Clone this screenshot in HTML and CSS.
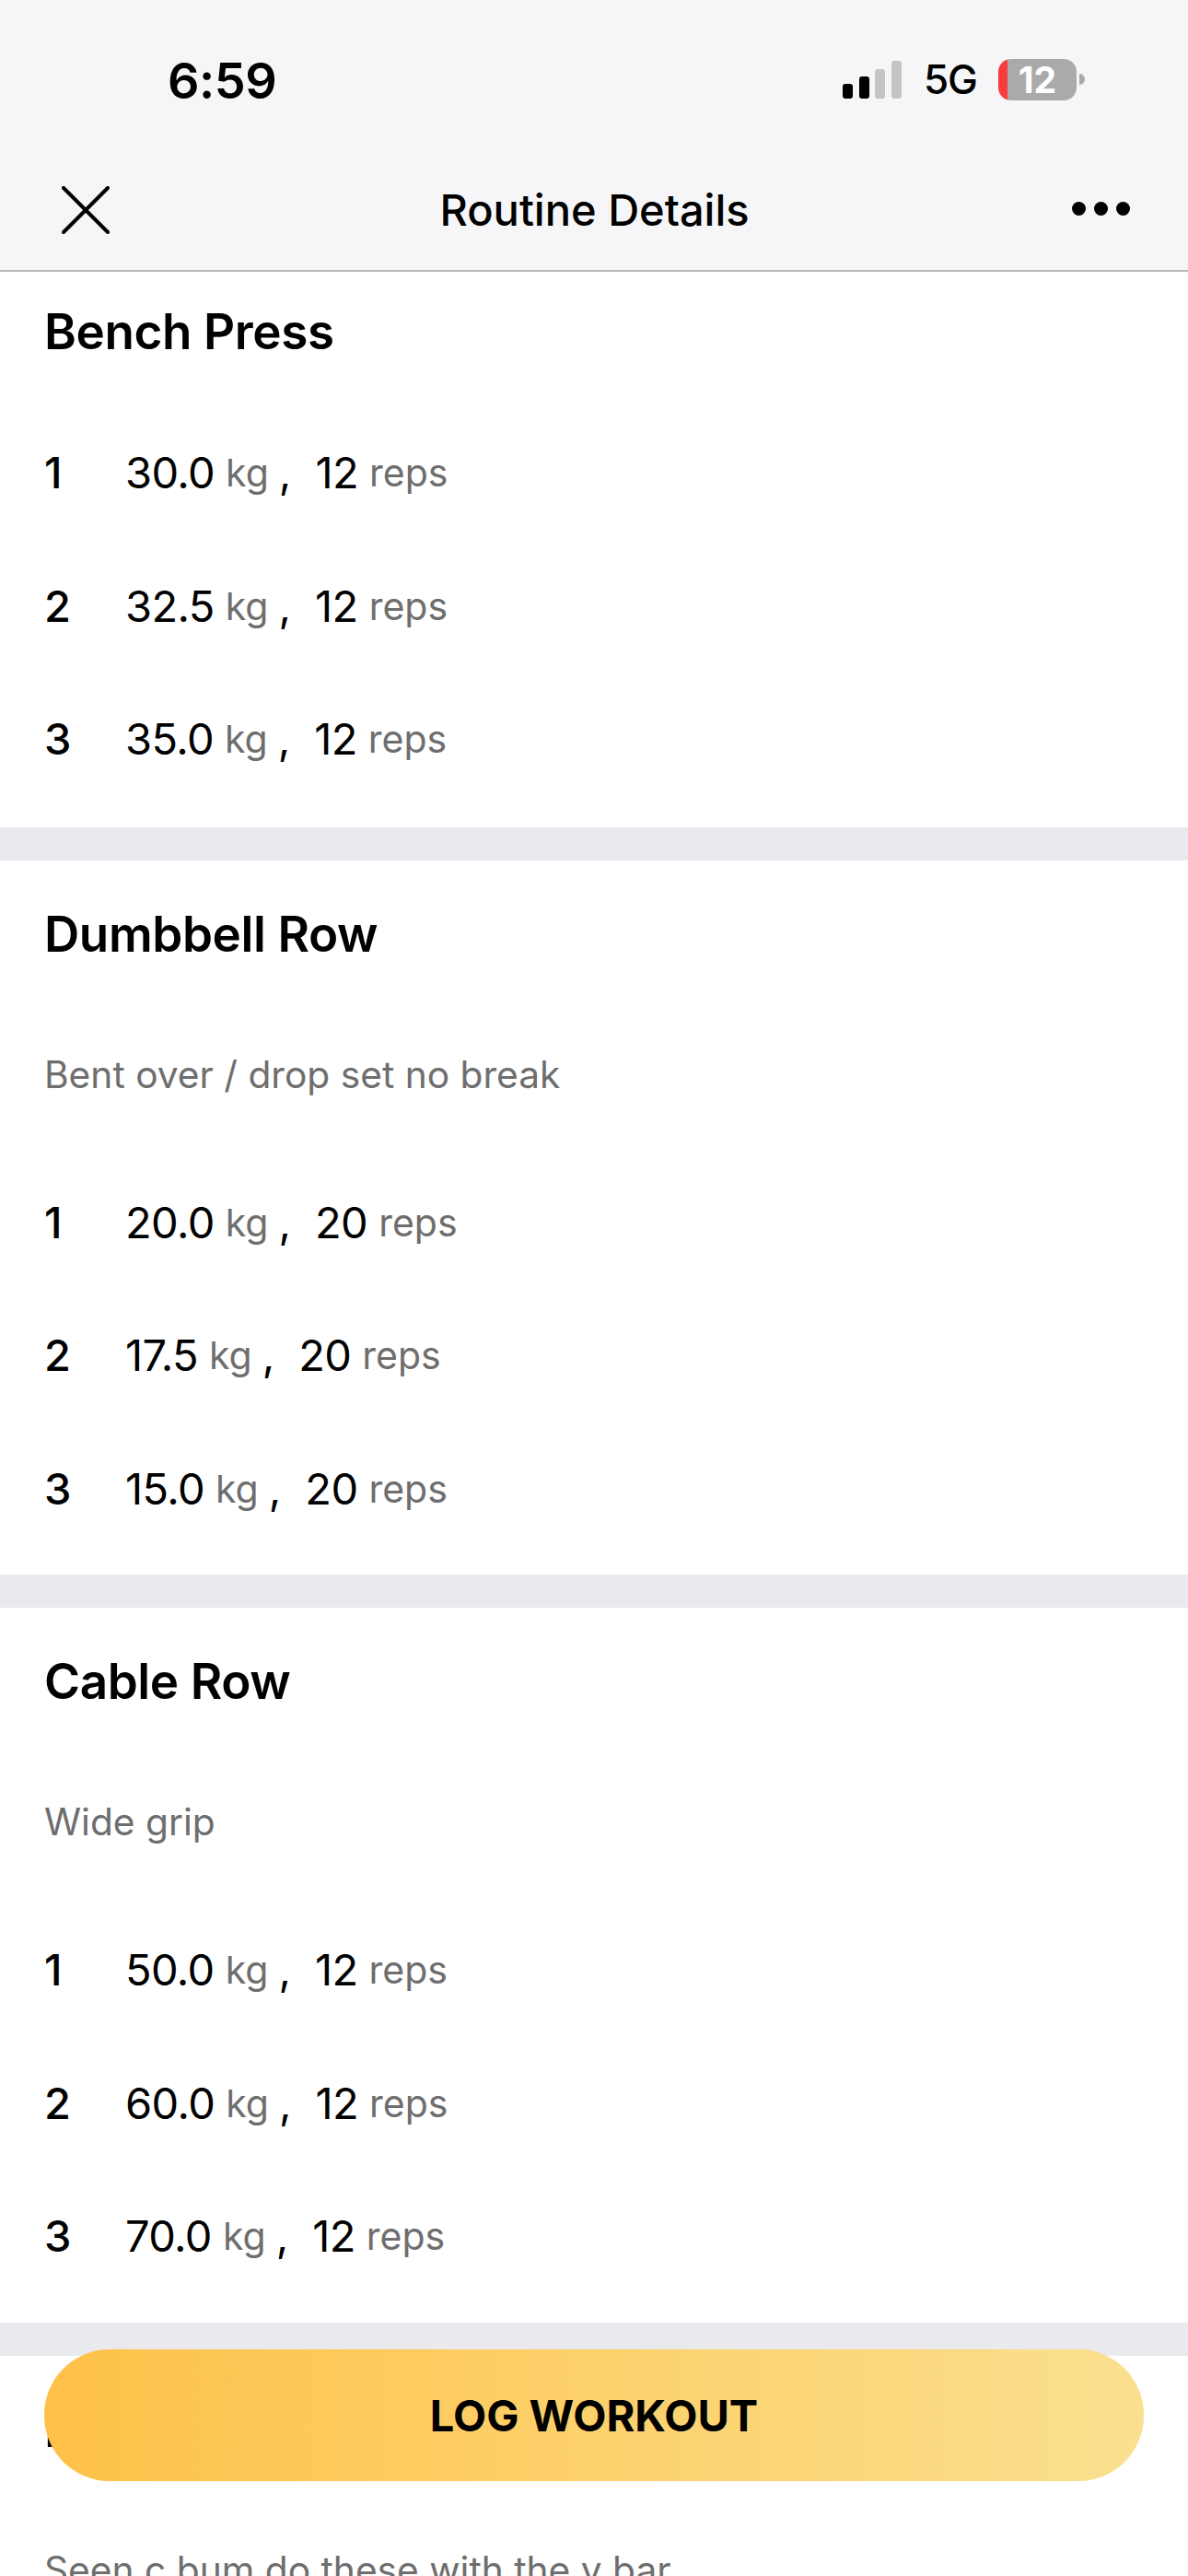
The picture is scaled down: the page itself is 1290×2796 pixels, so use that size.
FILE: index.html
```html
<!DOCTYPE html>
<html lang="en">
<head>
<meta charset="utf-8">
<title>Routine Details</title>
<link rel="stylesheet" href="styles.css">
</head>
<body>
<div class="screen">
  <header class="top">
    <div class="status">
      <span class="time">6:59</span>
      <div class="indicators">
        <svg class="signal" width="64" height="41" viewBox="0 0 64 41">
          <rect x="0" y="25" width="11" height="16" rx="3" fill="#000"/>
          <rect x="18" y="17" width="11" height="24" rx="3" fill="#000"/>
          <rect x="35" y="9" width="11" height="32" rx="3" fill="#c4c4c7"/>
          <rect x="53" y="0" width="11" height="41" rx="3" fill="#c4c4c7"/>
        </svg>
        <span class="network">5G</span>
        <div class="battery"><span class="battery-level">12</span></div>
      </div>
    </div>
    <nav class="nav">
      <svg class="close" width="52" height="52" viewBox="0 0 52 52">
        <path d="M2 2 L50 50 M50 2 L2 50" stroke="#000" stroke-width="4" stroke-linecap="round" fill="none"/>
      </svg>
      <h1 class="nav-title">Routine Details</h1>
      <svg class="more" width="63" height="15" viewBox="0 0 63 15">
        <circle cx="7.5" cy="7.5" r="7.5" fill="#000"/>
        <circle cx="31.5" cy="7.5" r="7.5" fill="#000"/>
        <circle cx="55.5" cy="7.5" r="7.5" fill="#000"/>
      </svg>
    </nav>
  </header>

  <main class="list">
    <section class="exercise exercise-first">
      <h2 class="name">Bench Press</h2>
      <div class="set"><span class="idx">1</span><span class="val">30.0</span><span class="unit">kg</span><span class="sep">,</span><span class="val">12</span><span class="unit">reps</span></div>
      <div class="set"><span class="idx">2</span><span class="val">32.5</span><span class="unit">kg</span><span class="sep">,</span><span class="val">12</span><span class="unit">reps</span></div>
      <div class="set"><span class="idx">3</span><span class="val">35.0</span><span class="unit">kg</span><span class="sep">,</span><span class="val">12</span><span class="unit">reps</span></div>
    </section>
    <section class="exercise">
      <h2 class="name">Dumbbell Row</h2>
      <p class="note">Bent over / drop set no break</p>
      <div class="set"><span class="idx">1</span><span class="val">20.0</span><span class="unit">kg</span><span class="sep">,</span><span class="val">20</span><span class="unit">reps</span></div>
      <div class="set"><span class="idx">2</span><span class="val">17.5</span><span class="unit">kg</span><span class="sep">,</span><span class="val">20</span><span class="unit">reps</span></div>
      <div class="set"><span class="idx">3</span><span class="val">15.0</span><span class="unit">kg</span><span class="sep">,</span><span class="val">20</span><span class="unit">reps</span></div>
    </section>
    <section class="exercise">
      <h2 class="name">Cable Row</h2>
      <p class="note">Wide grip</p>
      <div class="set"><span class="idx">1</span><span class="val">50.0</span><span class="unit">kg</span><span class="sep">,</span><span class="val">12</span><span class="unit">reps</span></div>
      <div class="set"><span class="idx">2</span><span class="val">60.0</span><span class="unit">kg</span><span class="sep">,</span><span class="val">12</span><span class="unit">reps</span></div>
      <div class="set"><span class="idx">3</span><span class="val">70.0</span><span class="unit">kg</span><span class="sep">,</span><span class="val">12</span><span class="unit">reps</span></div>
    </section>
    <section class="exercise">
      <h2 class="name">Lat Pulldown</h2>
      <p class="note">Seen c bum do these with the v bar</p>
    </section>
  </main>

  <button class="log" type="button">LOG WORKOUT</button>
</div>
</body>
</html>
```

FILE: styles.css
```css
* { box-sizing: border-box; }
html, body { margin: 0; padding: 0; background: #fff; }
body { font-family: "Inter", "Liberation Sans", sans-serif; color: #000; }

.screen {
  position: relative;
  width: 1290px;
  height: 2796px;
  overflow: hidden;
  display: flex;
  flex-direction: column;
}

.top {
  flex: none;
  height: 295px;
  background: #f6f6f9;
  border-bottom: 2px solid #b8b8b8;
  display: flex;
  flex-direction: column;
}

.status {
  height: 176px;
  display: flex;
  justify-content: space-between;
  align-items: flex-start;
  padding: 55px 121px 0 182px;
}
.time { font-size: 54px; font-weight: 600; line-height: 66px; letter-spacing: -0.5px; }
.indicators { display: flex; align-items: flex-end; height: 52px; }
.signal { display: block; }
.network { font-size: 44px; font-weight: 500; line-height: 41px; margin-left: 24px; letter-spacing: -1px; }
.battery {
  position: relative;
  width: 85px;
  height: 45px;
  margin-left: 23px;
  margin-bottom: -2px;
  border-radius: 14px;
  background: linear-gradient(to right, #fb3c3c 0, #fb3c3c 10px, #aaaaaa 10px);
  display: flex;
  align-items: center;
  justify-content: center;
}
.battery::after {
  content: "";
  position: absolute;
  left: 88px;
  top: 16px;
  width: 6px;
  height: 12px;
  border-radius: 0 6px 6px 0;
  background: #aaaaaa;
}
.battery-level { font-size: 39px; font-weight: 700; line-height: 45px; color: #fff; }

.nav {
  flex: 1;
  display: grid;
  grid-template-columns: 1fr auto 1fr;
  align-items: start;
  padding: 26px 63px 0 67px;
}
.close { display: block; }
.nav-title { margin: -2px 0 0; padding-right: 3px; font-size: 47px; font-weight: 500; line-height: 56px; }
.more { display: block; margin-top: 17px; justify-self: end; }

.list { flex: none; display: flex; flex-direction: column; }
.exercise {
  padding: 49px 48px 21px;
  border-bottom: 36px solid #e9e9ee;
}
.exercise-first { padding-top: 34px; padding-bottom: 23px; }
.name { margin: 0 0 50px; font-size: 53px; font-weight: 600; line-height: 62px; letter-spacing: -0.4px; }
.note { margin: 95px 0 61px; font-size: 40.7px; font-weight: 400; line-height: 54px; color: #6e6e6e; }
.set {
  height: 144.5px;
  display: flex;
  align-items: center;
  font-size: 47px;
  line-height: 56px;
}
.idx { width: 88px; flex: none; font-weight: 500; }
.val { letter-spacing: -0.6px; }
.unit { font-size: 41px; color: #6e6e6e; margin-left: 12px; }
.sep { margin: 0 26px 0 11px; }

.log {
  position: absolute;
  left: 48px;
  top: 2550px;
  width: 1194px;
  height: 143px;
  border: 0;
  border-radius: 71px;
  background: linear-gradient(to right, #fec148, #fae08f);
  color: #000;
  font-family: inherit;
  font-size: 47px;
  font-weight: 700;
}
```
